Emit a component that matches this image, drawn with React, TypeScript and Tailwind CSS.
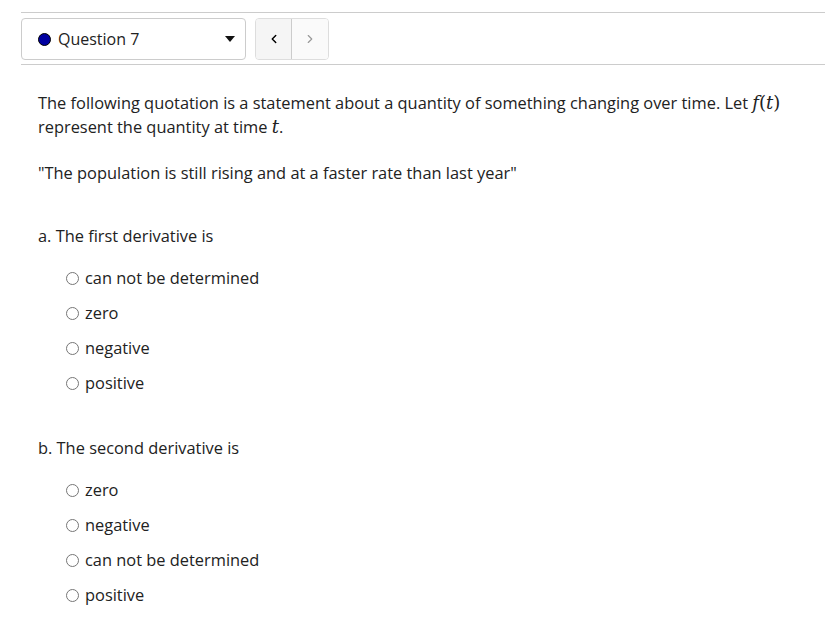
import { ChevronLeft, ChevronRight } from "lucide-react";

const partA = ["can not be determined", "zero", "negative", "positive"];
const partB = ["zero", "negative", "can not be determined", "positive"];

function Radio({ label }: { label: string }) {
  return (
    <label className="flex h-[35px] items-center gap-[6px]">
      <span className="inline-block h-[13px] w-[13px] rounded-full border border-[#767676] bg-white" />
      <span>{label}</span>
    </label>
  );
}

function Part({ title, options }: { title: string; options: string[] }) {
  return (
    <div>
      <p className="leading-6">{title}</p>
      <div className="mt-[13px] pl-[28px]">
        {options.map(o => (
          <Radio key={o} label={o} />
        ))}
      </div>
    </div>
  );
}

const mathFont = { fontFamily: "'DejaVu Serif', 'Liberation Serif', serif" };

export default function App() {
  return (
    <div className="min-h-[625px] bg-white pl-[21px] pt-[12px] text-[16.4px] text-[#222]"
      style={{ fontFamily: "'Open Sans', sans-serif" }}>
      <div className="flex h-[53px] items-start gap-[10px] border-y border-[#ccc] pt-[5px] text-[16px]">
        <div className="flex h-[42px] w-[225px] items-center rounded-[4px] border border-[#ccc] pl-[16px] pr-[10px]">
          <span className="h-[13px] w-[13px] rounded-full border border-black bg-[#0000a0]" />
          <span className="ml-[7px] flex-1">Question 7</span>
          <svg width="10" height="6" viewBox="0 0 10 6"><path d="M0 0h10L5 6z" fill="#111" /></svg>
        </div>
        <div className="-ml-px flex h-[42px] w-[74px] overflow-hidden rounded-[4px] border border-[#ddd]">
          <div className="flex w-[36px] items-center justify-center border-r border-[#ccc] bg-[#f5f5f5]">
            <ChevronLeft className="h-[14px] w-[14px] text-black" strokeWidth={2.5} />
          </div>
          <div className="flex flex-1 items-center justify-center bg-[#fafafa]">
            <ChevronRight className="h-[14px] w-[14px] text-[#999]" strokeWidth={2} />
          </div>
        </div>
      </div>

      <div className="pl-[17px] pt-[26px]">
        <p className="max-w-[780px] leading-6">
          The following quotation is a statement about a quantity of something changing over time. Let{" "}
          <span className="text-[18px] leading-none" style={mathFont}>
            <i>f</i>(<i>t</i>)
          </span>{" "}
          represent the quantity at time{" "}
          <i className="text-[18px] leading-none" style={mathFont}>t</i>.
        </p>
        <p className="mt-[22px] leading-6">"The population is still rising and at a faster rate than last year"</p>

        <div className="mt-[39px]">
          <Part title="a. The first derivative is" options={partA} />
        </div>
        <div className="mt-[35px]">
          <Part title="b. The second derivative is" options={partB} />
        </div>
      </div>
    </div>
  );
}
